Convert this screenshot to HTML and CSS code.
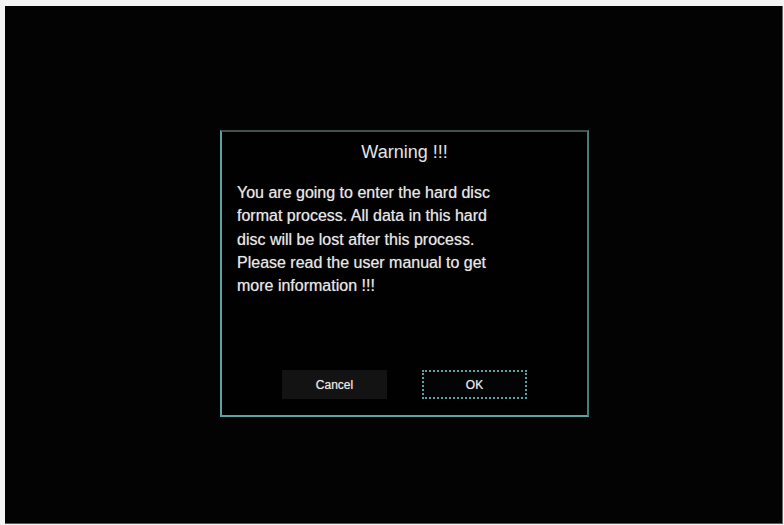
FILE: index.html
```html
<!DOCTYPE html>
<html>
<head>
<meta charset="utf-8">
<link rel="stylesheet" href="styles.css">
</head>
<body>
<div class="screen">
  <div class="dialog">
    <div class="title">Warning !!!</div>
    <div class="message">You are going to enter the hard disc<br>format process. All data in this hard<br>disc will be lost after this process.<br>Please read the user manual to get<br>more information !!!</div>
    <div class="buttons">
      <div class="btn btn-cancel">Cancel</div>
      <div class="btn btn-ok">OK</div>
    </div>
  </div>
</div>
</body>
</html>
```
FILE: styles.css
```css
html, body {
  margin: 0;
  padding: 0;
  background: #f4f4f4;
  width: 784px;
  height: 525px;
  overflow: hidden;
}
.screen {
  margin: 6px 0 0 5px;
  width: 778px;
  height: 518px;
  background: #030303;
  border-right: 1px solid #6a6a6a;
  border-bottom: 1px solid #5a5a5a;
  padding: 124px 0 0 215px;
  box-sizing: border-box;
  font-family: "Liberation Sans", Arial, sans-serif;
}
.dialog {
  width: 369px;
  height: 287px;
  box-sizing: border-box;
  border: 2px solid #5aa3a0;
  border-top-color: #40524f;
  border-right-color: #4a7c78;
  display: flex;
  flex-direction: column;
  padding: 9px 0 16px 15px;
  background: #010101;
}
.title {
  font-size: 18px;
  line-height: 22px;
  color: #e4e4e4;
  text-align: center;
  padding-right: 15px;
}
.message {
  margin-top: 18px;
  font-size: 16px;
  line-height: 23.3px;
  color: #e6e6e6;
  white-space: nowrap;
  text-shadow: 0 0 1px rgba(230, 230, 230, 0.6);
}
.buttons {
  margin-top: auto;
  display: flex;
  justify-content: center;
  gap: 35px;
  padding-right: 15px;
}
.btn {
  width: 105px;
  height: 29px;
  box-sizing: border-box;
  display: flex;
  align-items: center;
  justify-content: center;
  font-size: 12px;
  color: #e8e8e8;
  text-shadow: 0 0 1px rgba(230, 230, 230, 0.6);
}
.btn-cancel {
  background: #131313;
}
.btn-ok {
  border: 2px dotted #5aa3a0;
  background: #020406;
}
```
